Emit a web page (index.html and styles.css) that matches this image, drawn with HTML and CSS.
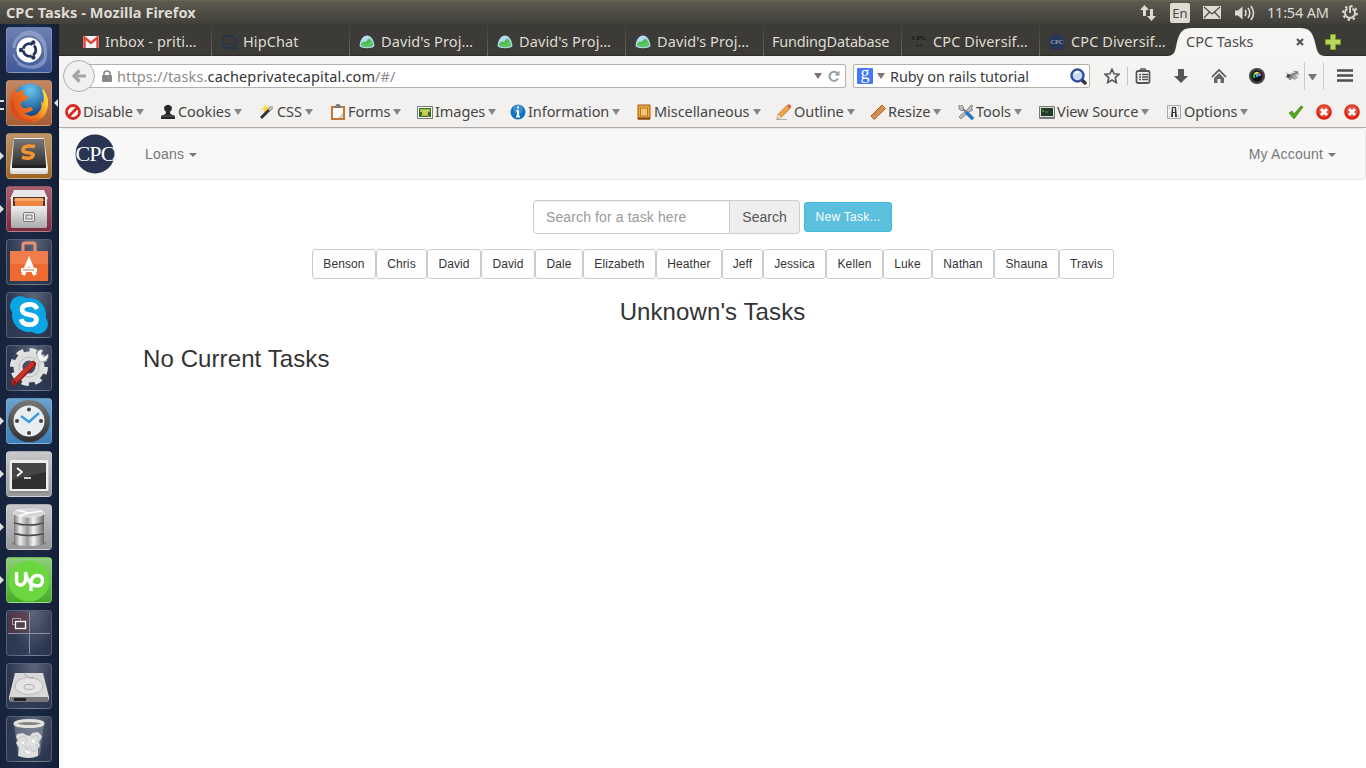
FILE: index.html
```html
<!DOCTYPE html>
<html lang="en">
<head>
<meta charset="utf-8">
<title>CPC Tasks</title>
<link rel="stylesheet" href="styles.css">
</head>
<body>
<svg class="defs" width="0" height="0">
  <defs>
    <linearGradient id="steel" x1="0" x2="1" y1="0" y2="0"><stop offset="0" stop-color="#777"/><stop offset=".2" stop-color="#eee"/><stop offset=".45" stop-color="#999"/><stop offset=".65" stop-color="#f4f4f4"/><stop offset="1" stop-color="#666"/></linearGradient>
    <linearGradient id="silver" x1="0" x2="0" y1="0" y2="1"><stop offset="0" stop-color="#f0f0f0"/><stop offset="1" stop-color="#a9a9a9"/></linearGradient>
    <linearGradient id="dark" x1="0" x2="0" y1="0" y2="1"><stop offset="0" stop-color="#777"/><stop offset="1" stop-color="#303030"/></linearGradient>
    <linearGradient id="fox" x1="0" x2="1" y1=".7" y2=".3"><stop offset="0" stop-color="#e04e1d"/><stop offset=".6" stop-color="#f17a20"/><stop offset="1" stop-color="#ffe13a"/></linearGradient>
    <radialGradient id="globe" cx=".5" cy=".2" r=".8"><stop offset="0" stop-color="#6cc5ef"/><stop offset="1" stop-color="#0b4384"/></radialGradient>
    <symbol id="camp" viewBox="0 0 16 14"><path d="M8 .5c4 0 7 4.500 7.500 10.500-2 3-13 3-15 0C1 5 4 .5 8 .5z" fill="#b5dbf5"/><path d="M1.500 10c1-2 2-3.500 3.500-3.500 1 0 1 .8 2 0 1.500-1.500 2-3.500 3.500-3 2 .8 3 3.500 4 6.500-2 3-11 3-13 0z" fill="#5cc75b"/><path d="M4 8l1.500.2L7 7.500l1 1 2-3 .5 1.500" fill="none" stroke="#34a853" stroke-width=".9"/></symbol>
    <symbol id="stop" viewBox="0 0 16 16"><circle cx="8" cy="8" r="7.800" fill="#dc220c"/><circle cx="8" cy="7" r="6" fill="#fff" opacity=".2"/><path d="M5 5l6 6m0-6l-6 6" stroke="#fff" stroke-width="3"/></symbol>
  </defs>
</svg>

<header class="titlebar">
  <span class="window-title">CPC Tasks - Mozilla Firefox</span>
  <div class="indicators">
    <svg width="18" height="16" viewBox="0 0 18 16"><path d="M5.500 0l4.500 5H7v6H4V5H1zM12.500 16L8 11h3V4h3v7h3z" fill="#dfdbd2"/></svg>
    <span class="lang">En</span>
    <svg class="mail" width="18" height="13" viewBox="0 0 18 13"><rect width="18" height="13" fill="#dfdbd2"/><path d="M1 1l8 7 8-7M1 12l5.500-6M17 12l-5.500-6" fill="none" stroke="#4a4943" stroke-width="1.200"/></svg>
    <svg class="sound" width="20" height="16" viewBox="0 0 20 16"><path d="M0 5.500h3L7.500 1.500v13L3 10.500H0z" fill="#dfdbd2"/><path d="M10 5q2 3 0 6M13 3q3.600 5 0 10M16 1q5 7 0 14" fill="none" stroke="#dfdbd2" stroke-width="1.600"/></svg>
    <span class="clock">11:54 AM</span>
    <svg width="16" height="16" viewBox="0 0 16 16"><circle cx="8" cy="8" r="6.900" fill="none" stroke="#dfdbd2" stroke-width="2" stroke-dasharray="2.500 2.920"/><path d="M5.500 3.600a5 5 0 1 0 5 0" fill="none" stroke="#dfdbd2" stroke-width="1.900"/><path d="M8 1v7" stroke="#dfdbd2" stroke-width="1.800"/></svg>
  </div>
</header>

<div class="desktop">
<nav class="launcher">
  <div class="tile blue"><svg viewBox="0 0 46 46"><g fill="none" stroke="#a9b9dc" opacity=".55"><path d="M8 21C8 4 35 0 39 22S22 43 12 36" stroke-width="3"/><path d="M15 7c14-8 28 5 24 20M38 32C29 44 12 41 7 27" stroke-width="2"/></g><circle cx="23" cy="23" r="12.500" fill="#fff"/><circle cx="23.500" cy="23" r="6.300" fill="none" stroke="#26345d" stroke-width="2.800" stroke-dasharray="11.600 1.600" stroke-dashoffset="-7.400"/><g fill="#26345d"><circle cx="15" cy="23" r="2.200"/><circle cx="27.300" cy="15.500" r="2.200"/><circle cx="27.300" cy="30.500" r="2.200"/></g></svg></div>
  <div class="tile brown win3 focused"><svg viewBox="0 0 46 46"><circle cx="24" cy="20" r="16.500" fill="url(#globe)"/><path d="M37 9q6 8 5 16-2 17-19 17Q4 41 4 24 4 14 9 8l1 5q5-4 8-2l-1 4 5 1q0 4-7 6-1 5 3 6 3 1 5-1 3 0 4 2-3 4-9 4 8 6 14 0 5-5 3-12l2 2q2-6-1-13z" fill="url(#fox)"/><path d="M5 24q0 13 12 17 10 3 18-4-12 5-20-1-8-5-7-17z" fill="#cf351b" opacity=".35"/></svg></div>
  <div class="tile ochre win"><svg viewBox="0 0 46 46"><rect x="4" y="34" width="38" height="7" rx="2" fill="#ddd"/><path d="M8 5h30l4 30q0 3-3 3H7q-3 0-3-3z" fill="#ededed"/><path d="M8 6h30l2 26H6z" fill="url(#dark)"/><path d="M6 32h34v3H6z" fill="#222"/><path d="M29 13.500q-11-2-12 3-.5 3 5 3.200 6 .5 5 3-1.500 4-11 1.500" fill="none" stroke="#f59230" stroke-width="3.600"/></svg></div>
  <div class="tile red win"><svg viewBox="0 0 46 46"><path d="M8 4h30l4 9H4z" fill="#e7e7e7"/><path d="M5 11h36v29q0 2-2 2H7q-2 0-2-2z" fill="url(#silver)"/><path d="M7 11h32v10H7z" fill="#4c332a"/><path d="M9 12h28l1 3H8z" fill="#f5a76c"/><path d="M9 15h28v5H9z" fill="#ee8340"/><path d="M5 20h36v20q0 2-2 2H7q-2 0-2-2z" fill="url(#silver)"/><rect x="17.500" y="26.500" width="11" height="9" rx="1.500" fill="#eee" stroke="#777"/><rect x="20" y="29" width="6" height="4" fill="#ddd" stroke="#777"/></svg></div>
  <div class="tile"><svg viewBox="0 0 46 46"><path d="M17 13V6q0-2 2-2h8q2 0 2 2v7" fill="none" stroke="#ed9074" stroke-width="3"/><path d="M4 12h38v30H4z" fill="#ee6a30"/><path d="M4 12h38v13H4z" fill="#fff" opacity=".12"/><path d="M17 36l6-14 6 14" fill="none" stroke="#fff" stroke-width="4"/><path d="M15 31h16" stroke="#fff" stroke-width="4"/><path d="M17 31h11" stroke="#ee6a30"/></svg></div>
  <div class="tile"><svg viewBox="0 0 46 46"><g fill="#0aa5e5"><circle cx="23" cy="23" r="17"/><circle cx="14" cy="14" r="10"/><circle cx="32" cy="32" r="10"/></g><path d="M31 17q-2-5-8-4.500-7 .5-7 5 0 4 7 5.200 7.500 1 7.500 5-.5 5-7.500 5-6.500 0-8-5.500" fill="none" stroke="#fff" stroke-width="4.800"/></svg></div>
  <div class="tile"><svg viewBox="0 0 46 46"><circle cx="23" cy="22" r="16.500" fill="none" stroke="#e4e4e4" stroke-width="5" stroke-dasharray="7 5.960"/><circle cx="23" cy="22" r="11" fill="none" stroke="#dedede" stroke-width="9"/><circle cx="23" cy="22" r="10" fill="none" stroke="#bbb"/><path d="M23 24L36 10" stroke="#ddd" stroke-width="4"/><path d="M31 8q1-4 6-3l-2 4 3 3 4-3q1 5-3 7l-5 1q-4-4-3-9z" fill="#f3f3f3" stroke="#999" stroke-width=".7"/><path d="M8 38L27 19" stroke="#851b18" stroke-width="6" stroke-linecap="round"/><path d="M8 37L26 19" stroke="#cc302a" stroke-width="4.500" stroke-linecap="round"/><circle cx="8.500" cy="37" r="1.500" fill="#771310"/></svg></div>
  <div class="tile sky win"><svg viewBox="0 0 46 46"><circle cx="23" cy="23" r="21" fill="url(#dark)"/><circle cx="23" cy="23" r="15.500" fill="#e7edf1"/><g fill="#424242"><circle cx="23" cy="11.500" r="2"/><circle cx="23" cy="35" r="2"/><circle cx="11" cy="23" r="2"/><circle cx="35" cy="23" r="2"/></g><path d="M15 18l8 6 10-9" fill="none" stroke="#379be8" stroke-width="2.400"/></svg></div>
  <div class="tile grey win"><svg viewBox="0 0 46 46"><rect x="3.500" y="9" width="39" height="33" rx="1.500" fill="#8b8b8b"/><rect x="3.500" y="9" width="39" height="31" rx="1" fill="#eee"/><rect x="6" y="12" width="34" height="26" fill="#303030"/><path d="M6 12h34v9L6 29z" fill="#fff" opacity=".1"/><path d="M11 17l5 4-5 4M18 27h7" fill="none" stroke="#fff" stroke-width="1.700"/></svg></div>
  <div class="tile grey win"><svg viewBox="0 0 46 46"><ellipse cx="23" cy="39" rx="17" ry="3" fill="#777"/><g fill="url(#steel)"><path d="M8 30v8q0 4 15 4t15-4v-8q-15 5-30 0zM8 20v8q15 5 30 0v-8q-15 5-30 0zM8 9v9q15 5 30 0V9z"/></g><path d="M8 19q15 4 30 0M8 29.500q15 4 30 0" fill="none" stroke="#484848" stroke-width="1.500"/><ellipse cx="23" cy="9" rx="15.500" ry="4" fill="#d4d4d4" stroke="#e5e5e5"/><path d="M23 9L11 6M23 9l13-2M23 9l-10 3" stroke="#fff" stroke-width="1.500"/></svg></div>
  <div class="tile green win"><svg viewBox="0 0 46 46"><circle cx="23" cy="24" r="20.500" fill="#6bd63f"/><path d="M10.500 15v8q0 5 4 5t5-5v-8q1 8 6 12 3 2 6 2 5-.5 5-5.500t-5-5q-6 0-6.500 7V34" fill="none" stroke="#fff" stroke-width="3.400"/></svg></div>
  <div class="tile spaces"><svg viewBox="0 0 46 46"><rect x="2" y="2" width="21" height="21" fill="#6b3543" opacity=".55"/><path d="M23.500 2v42M2 23.500h42" stroke="#8992a3"/><path d="M6.500 8.500h8v6h-8z" fill="none" stroke="#aaa3aa"/><rect x="9.500" y="11.500" width="10" height="7" fill="#52414a" stroke="#fff" stroke-width="1.300"/></svg></div>
  <div class="tile"><svg viewBox="0 0 46 46"><path d="M9 10h28l6 24q0 4-2 5H5q-2-1-2-5z" fill="#d8d8d8"/><path d="M4 34h38v4q0 1-1 1H5q-1 0-1-1z" fill="#777"/><path d="M8 35h12v3H8z" fill="#222"/><ellipse cx="23" cy="23" rx="14" ry="8.500" fill="#e4e4e4" stroke="#b8b8b8"/><ellipse cx="23" cy="24" rx="5" ry="2.500" fill="none" stroke="#aaa"/><path d="M28 15q-6 1-10-4" fill="none" stroke="#aaa"/></svg></div>
  <div class="tile"><svg viewBox="0 0 46 46"><path d="M8 7l4 32q11 6 22 0l4-32z" fill="#bac2cb" opacity=".35"/><path d="M11 18l6-1 3 2 4 1 2-3 6-1 3 3 1 2-3 5 1 4-2 3v7q-9 4-20 0l1-8-3-5 2-3-2-3z" fill="#dedede"/><path d="M13 22l5-2 3 5-4 4 5 4-4 4m7-15l6-3 2 5-5 3 5 4-6 5-4-6" fill="none" stroke="#c5c5c5"/><path d="M16 26l2 2m8-4l3 3m-10 8l5 2" stroke="#fff" stroke-width="2"/><ellipse cx="23" cy="7.500" rx="14" ry="3" fill="#838783" stroke="#e3e4df" stroke-width="3"/></svg></div>
</nav>

<main class="browser">
  <div class="tabs">
    <div class="tab"><svg width="16" height="16" viewBox="0 0 16 16"><rect y="2" width="16" height="12" rx="1" fill="#f4f4f4"/><path d="M1.500 14V3.500L8 9l6.500-5.500V14" fill="none" stroke="#df4238" stroke-width="2.400"/></svg><span>Inbox - priti…</span></div>
    <div class="tab"><svg width="16" height="16" viewBox="0 0 16 16"><path d="M13 12.500A7 6.300 0 1 0 10 14l4.500.7z" fill="none" stroke="#22344f" stroke-width="1.500"/><path d="M4.500 9q3.500 3 7 0" fill="none" stroke="#22344f" stroke-width="1.200"/></svg><span>HipChat</span></div>
    <div class="tab"><svg width="16" height="14"><use href="#camp"/></svg><span>David's Proj…</span></div>
    <div class="tab"><svg width="16" height="14"><use href="#camp"/></svg><span>David's Proj…</span></div>
    <div class="tab"><svg width="16" height="14"><use href="#camp"/></svg><span>David's Proj…</span></div>
    <div class="tab"><span class="funding">FundingDatabase</span></div>
    <div class="tab"><i class="cpc-plus">CPC<br>++</i><span>CPC Diversif…</span></div>
    <div class="tab last"><i class="cpc-mini">CPC</i><span>CPC Diversif…</span></div>
    <div class="tab-active">
      <svg class="tab-shape" width="160" height="28" viewBox="0 0 160 28"><path d="M0 28C10 28 9 22 11 14 14 3 17 0 26 0H134C143 0 146 3 149 14 151 22 151 28 160 28z" fill="#f6f5f4"/></svg>
      <div class="tab-label"><span>CPC Tasks</span><svg width="8" height="8" viewBox="0 0 8 8"><path d="M1 1l6 6m0-6L1 7" stroke="#555" stroke-width="2.200"/></svg></div>
    </div>
    <svg class="new-tab" width="16" height="16" viewBox="0 0 16 16"><path d="M5.500.5h5v5h5v5h-5v5h-5v-5h-5v-5h5z" fill="#b7d65b" stroke="#7b9c2c"/></svg>
  </div>

  <div class="navigation">
    <div class="back"><svg width="16" height="16" viewBox="0 0 16 16"><path d="M8.500 2.500L3 8l5.500 5.500M3.500 8H15" fill="none" stroke="#a5a5a5" stroke-width="3.200"/></svg></div>
    <div class="url">
      <svg width="10" height="12" viewBox="0 0 10 12"><path d="M2 6V3.500Q2 1 5 1t3 2.500V6" fill="none" stroke="#888" stroke-width="1.600"/><rect y="5" width="10" height="7" rx="1" fill="#888"/></svg>
      <span class="address">https://tasks.<b>cacheprivatecapital.com</b>/#/</span>
      <i class="caret"></i>
      <svg width="12" height="12" viewBox="0 0 12 12"><path d="M9.500 3.500A4.500 4.500 0 1 0 10 8.500" fill="none" stroke="#93a0a8" stroke-width="2"/><path d="M6.500 5.500h5V.5z" fill="#93a0a8"/></svg>
    </div>
    <div class="search">
      <i class="google">g</i><i class="caret"></i><span>Ruby on rails tutorial</span>
      <svg width="17" height="17" viewBox="0 0 17 17"><path d="M11 11l4 4" stroke="#333" stroke-width="3.500" stroke-linecap="round"/><circle cx="7.500" cy="7.500" r="6" fill="#c7dcf5" stroke="#2f4d9c" stroke-width="2.400"/><path d="M5 5q2-2 4-1" fill="none" stroke="#fff" stroke-width="2"/></svg>
    </div>
    <div class="actions">
      <span class="star"><svg viewBox="0 0 16 16"><path d="M8 1.200l2 4.600 5 .5-3.800 3.300 1.200 5L8 12l-4.400 2.600 1.200-5L1 6.300l5-.5z" fill="none" stroke="#555" stroke-width="1.600"/></svg></span>
      <svg viewBox="0 0 16 16"><rect x="1.500" y="3" width="13" height="12" rx="1.500" fill="none" stroke="#555" stroke-width="1.800"/><path d="M5 3l1-2h4l1 2M4 6.500h2M7 6.500h6M4 9h2m1 0h6M4 11.500h2m1 0h6" fill="none" stroke="#555" stroke-width="1.500"/></svg>
      <svg viewBox="0 0 16 16"><path d="M5 1h6v7h4l-7 7-7-7h4z" fill="#555"/></svg>
      <svg viewBox="0 0 16 16"><path d="M1 9l7-7 7 7" fill="none" stroke="#555" stroke-width="1.700"/><path d="M3 10l5-5 5 5v5H9.500v-4h-3v4H3z" fill="#666"/></svg>
      <svg viewBox="0 0 16 16"><circle cx="8" cy="8" r="8" fill="#444"/><circle cx="8" cy="8" r="5.500" fill="#111"/><g fill="none" stroke-width="2"><path d="M5.500 10a3.500 3.500 0 0 1 0-4" stroke="#20cf42"/><path d="M5.500 6q2-2 4-1" stroke="#d9e944"/><path d="M9.500 5q2 1 2 3" stroke="#ed329d"/><path d="M8 9V7h3" stroke="#36a9e9"/></g></svg>
      <svg class="fly" viewBox="0 0 16 16"><path d="M2 7l5-2 7-2-2 5 2 2-3 1-2-1-3 2-3-1 2-2z" fill="#aaa"/><path d="M2 5l5 4 4 3M5 12l3-5 5-3M1 9h4l3-3M9 3l4 1 1 3" fill="none" stroke="#666" stroke-width=".8"/><circle cx="4" cy="8" r="1.800" fill="#444"/></svg>
      <span class="fly-menu"><i class="caret"></i></span>
      <svg class="burger" viewBox="0 0 16 16"><path d="M0 2.500h16M0 7.500h16M0 12.500h16" stroke="#4d4d4d" stroke-width="2.600"/></svg>
    </div>
  </div>

  <div class="devbar">
    <div><svg viewBox="0 0 16 16"><circle cx="8" cy="8" r="6.500" fill="#fff" stroke="#d52a22" stroke-width="2.800"/><path d="M3.500 12.500l9-9" stroke="#d52a22" stroke-width="2.800"/></svg><span>Disable</span><i class="caret"></i></div>
    <div><svg viewBox="0 0 16 16"><path d="M6 8Q3 5 4.500 2.500 8-1 11.500 2.500 13 5 10 8l.5 2 4.500 2v3H1v-3l4.500-2z" fill="#292929"/><path d="M1 12h14" stroke="#777" stroke-width=".7"/></svg><span>Cookies</span><i class="caret"></i></div>
    <div><svg viewBox="0 0 16 16"><path d="M6 0l1 3 3-1-2 3 2 3-3-1-2 2V6L1 5l4-1z" fill="#ffd52c"/><path d="M2 14L13 3" stroke="#333" stroke-width="3"/><path d="M10 6l4-4" stroke="#ccc" stroke-width="2"/></svg><span>CSS</span><i class="caret"></i></div>
    <div><svg viewBox="0 0 16 16"><rect x="1" y="2" width="14" height="14" fill="#c77731"/><path d="M3 4h10v10H3z" fill="#fff"/><path d="M13 14V9l-5 5z" fill="#ccc"/><path d="M5 4V2l2-2h2l2 2v2z" fill="#777"/></svg><span>Forms</span><i class="caret"></i></div>
    <div><svg viewBox="0 0 16 16"><path d="M.5 2.500h15v12H.5z" fill="#fff" stroke="#777"/><path d="M2 4h12v9H2z" fill="#316a20"/><path d="M3 5h10v3H3z" fill="#9fc85a"/><circle cx="8" cy="9" r="3" fill="#d5ce55"/><path d="M4 12q4-3 8 0" stroke="#b4c64d" fill="none"/></svg><span>Images</span><i class="caret"></i></div>
    <div><svg viewBox="0 0 16 16"><circle cx="8" cy="8" r="7.500" fill="#0c72c6"/><circle cx="8" cy="5" r="5" fill="#fff" opacity=".2"/><path d="M8 2.500v2M6.500 7H8v5M6 12.500h4" stroke="#fff" stroke-width="2" fill="none"/></svg><span>Information</span><i class="caret"></i></div>
    <div><svg viewBox="0 0 16 16"><path d="M2 1h12v14H2z" fill="#f0a73e" stroke="#a25a14"/><path d="M4.500 4h7v8h-7z" fill="#f6c46c" stroke="#ba7424"/><path d="M2 14.500h12" stroke="#804410" stroke-width="2"/></svg><span>Miscellaneous</span><i class="caret"></i></div>
    <div><svg viewBox="0 0 16 16"><path d="M1 15l1.500-5L11 1.500l3 3L5.500 13z" fill="#f3a43e" stroke="#a66125" stroke-width=".7"/><path d="M11 1.500L13 0l2.500 2.500-1.500 2z" fill="#df5548"/><path d="M1 15l1.500-4 2.500 2z" fill="#eee"/><path d="M0 15.500h11" stroke="#aaa"/></svg><span>Outline</span><i class="caret"></i></div>
    <div><svg viewBox="0 0 16 16"><path d="M1 12L12 1l3.500 3.500L4 15.500z" fill="#d99652" stroke="#a86028"/><path d="M4 10l1.500 1.500M6 8l1.500 1.500M8 6l1.500 1.500M10 4l1.500 1.500" stroke="#b0703a"/></svg><span>Resize</span><i class="caret"></i></div>
    <div><svg viewBox="0 0 16 16"><path d="M2 2l11 11" stroke="#777" stroke-width="2"/><path d="M1 1v4l3 2 2-2-2-4M10 5l3-4 2 1-2 2 2 2-4 2L3 15l-2-2z" fill="#bbb" stroke="#666" stroke-width=".7"/><path d="M9 9l5 5" stroke="#2876c6" stroke-width="3.600" stroke-linecap="round"/></svg><span>Tools</span><i class="caret"></i></div>
    <div><svg viewBox="0 0 16 16"><path d="M.5 2.500h15v12H.5z" fill="#ddd" stroke="#777"/><path d="M2 4h12v8H2z" fill="#243a24"/><path d="M3 5.500l2 1.500-2 1M6 8h3" stroke="#77bc65" fill="none" stroke-width=".7"/><path d="M1 13.500h14" stroke="#777"/></svg><span>View Source</span><i class="caret"></i></div>
    <div><svg viewBox="0 0 16 16"><path d="M1.500 1.500h13v13h-13z" fill="#f3f3f3" stroke="#aaa"/><path d="M6 3h4l1 10H9V9H7v4H5z" fill="#333"/><path d="M7 4h2v4H7z" fill="#ddd"/><path d="M3 4h1m-1 8h1m8-8h1m-1 8h1" stroke="#888"/></svg><span>Options</span><i class="caret"></i></div>
    <div class="status"><svg viewBox="0 0 16 16"><path d="M1 9l3-2 2 3 7-8 2 1-9 12z" fill="#53a719" stroke="#327509" stroke-width=".6"/></svg><svg><use href="#stop"/></svg><svg><use href="#stop"/></svg></div>
  </div>

  <section class="page">
    <nav class="navbar">
      <span class="logo"><svg viewBox="0 0 40 40"><circle cx="20" cy="20" r="19.500" fill="#293452"/></svg><b>CPC</b></span>
      <a class="loans">Loans<i></i></a><a class="account">My Account<i></i></a>
    </nav>
    <div class="task-search"><span class="field">Search for a task here</span><span class="addon">Search</span><span class="new-task">New Task...</span></div>
    <div class="people"><span>Benson</span><span>Chris</span><span>David</span><span>David</span><span>Dale</span><span>Elizabeth</span><span>Heather</span><span>Jeff</span><span>Jessica</span><span>Kellen</span><span>Luke</span><span>Nathan</span><span>Shauna</span><span>Travis</span></div>
    <h3 class="owner">Unknown's Tasks</h3>
    <h3 class="empty">No Current Tasks</h3>
  </section>
</main>
</div>
</body>
</html>
```
FILE: styles.css
```css
* { box-sizing: border-box; }
body { margin: 0; width: 1366px; height: 768px; overflow: hidden; background: #fff; font: 14.5px/20px "Noto Sans", sans-serif; }
svg { display: block; flex: none; }
i { font-style: normal; flex: none; }
.defs { position: absolute; }
.titlebar { height: 24px; display: flex; justify-content: space-between; align-items: center; padding: 0 8px 0 6px; background: linear-gradient(#5c5a50, #403f3a); border-top: 1px solid #66644f; color: #dfdbd2; }
.window-title { font-weight: 700; font-size: 14.5px; letter-spacing: .06px; padding-bottom: 2px; }
.indicators { display: flex; align-items: center; }
.lang { width: 20px; height: 20px; margin: 0 13px 0 13px; background: #dfdbd2; border-radius: 2px; color: #494842; font-size: 13px; text-align: center; }
.sound { margin: 0 12px 0 14px; }
.clock { width: 75px; white-space: nowrap; letter-spacing: -.2px; padding-bottom: 2px; }
.desktop { display: flex; height: 744px; }
.launcher { width: 59px; flex: none; display: flex; flex-direction: column; gap: 7px; padding: 3px 0 0 6px; background: linear-gradient(90deg, #17233c, #1a2946 50%, #142038); border-right: 1px solid #111a2b; }
.tile { position: relative; flex: none; width: 46px; height: 46px; border-radius: 4px; border: 1px solid #ffffff30; background: radial-gradient(ellipse at 60% 0, #a0a3b080, #ffffff18 65%); }
.tile svg { width: 46px; height: 46px; margin: -1px; }
.tile.blue { background: linear-gradient(#6e80b0, #40599a); }
.tile.brown { background: linear-gradient(#c28765, #a75e34); }
.tile.ochre { background: linear-gradient(#be966a, #9b6524); }
.tile.red { background: linear-gradient(#a6606e, #7c2c3e); }
.tile.sky { background: linear-gradient(#6ba1cf, #3c7eb5); }
.tile.grey { background: linear-gradient(#c8c8cc, #96969b); }
.tile.green { background: linear-gradient(#8fcf78, #48a92b); }
.win::before { content: ""; position: absolute; left: -7px; top: 18px; border: 4px solid transparent; border-left-color: #dedede; border-right: 0; }
.win3::before { content: ""; position: absolute; left: -7px; top: 19px; width: 4px; height: 6px; border: solid #dedede; border-width: 2px 0; }
.focused::after { content: ""; position: absolute; right: -7px; top: 18px; border: 4px solid transparent; border-right-color: #dedede; border-left: 0; }
.browser { flex: 1; min-width: 0; }
.tabs { display: flex; height: 32px; padding-left: 15px; background: #3c3b37; border-bottom: 1px solid #2d2c29; color: #dfdbd2; }
.tab { width: 138px; height: 32px; flex: none; display: flex; align-items: center; gap: 6px; padding: 4px 0 0 9px; border-right: 1px solid; border-image: linear-gradient(#3c3b37, #6b6a65) 1; white-space: nowrap; }
.tab.last { border-image: none; border-color: transparent; width: 126px; }
.tab span { letter-spacing: .1px; padding-bottom: 2px; }
.tab .funding { letter-spacing: -.2px; margin-left: -1px; }
.cpc-plus, .cpc-mini { width: 16px; font: bold 7px/8px "Liberation Serif", serif; text-align: center; color: #151515; }
.cpc-mini { height: 16px; border-radius: 8px; background: #26355a; color: #b8bfce; line-height: 16px; font-weight: 400; }
.tab-active { width: 160px; height: 28px; margin-top: 4px; flex: none; display: grid; position: relative; z-index: 1; }
.tab-active > * { grid-area: 1 / 1; }
.tab-label { display: flex; align-items: center; justify-content: space-between; padding: 0 22px 0 20px; position: relative; color: #4c4c4c; }
.tab-label span { padding-bottom: 2px; }
.new-tab { margin: 10px 0 0 -1px; }
.navigation { height: 40px; display: flex; align-items: center; padding-left: 4px; background: linear-gradient(#f6f5f4, #f2f1f0); color: #3c3c3c; }
.back { width: 32px; height: 32px; flex: none; position: relative; z-index: 1; border: 1px solid #a9b0b8; border-radius: 50%; background: #f2f1f0; display: grid; place-items: center; }
.url { width: 766px; height: 24px; flex: none; margin-left: -15px; display: flex; align-items: center; background: #fff; border: 1px solid #b3afa9; border-radius: 2px; padding: 0 5px 0 21px; }
.address { flex: 1; margin-left: 5px; color: #8c8c8c; white-space: nowrap; letter-spacing: .12px; }
.address b { font-weight: 400; color: #333; }
.caret { border: 4.5px solid transparent; border-top: 6px solid #777; border-bottom: 0; }
.url .caret { margin-right: 6px; }
.search { width: 237px; height: 24px; flex: none; margin-left: 7px; display: flex; align-items: center; background: #fff; border: 1px solid #b3afa9; border-radius: 2px; padding: 0 2px 0 3px; }
.search > span { flex: 1; margin-left: 5px; white-space: nowrap; letter-spacing: -.1px; }
.google { width: 16px; height: 16px; margin-right: 4px; border-radius: 1px; background: #4379f5; color: #fff; font: 18px/11px "Liberation Serif", serif; text-align: center; }
.actions { display: grid; grid-template-columns: 31px 38px 38px 38px 38px 28px 19px 32px; padding-left: 14px; align-items: center; }
.actions svg { width: 16px; height: 16px; }
.star { width: 24px; height: 18px; border-right: 1px solid #c5c5c5; padding-top: 1px; }
.actions .fly { margin-left: -3px; width: 17px; }
.fly-menu { height: 28px; width: 20px; border: solid #c8cbd0; border-width: 0 1px; padding: 12px 0 0 3px; margin-left: -11px; }
.fly-menu .caret { display: block; width: 9px; }
.burger { margin-left: 3px; }
.devbar { height: 32px; display: grid; grid-template-columns: 95px 99px 71px 87px 93px 126px 140px 94px 88px 81px 127px 122px 66px; padding-left: 6px; background: #f2f1f0; border-bottom: 1px solid #b1aeaa; color: #454545; }
.devbar > div { display: flex; align-items: center; white-space: nowrap; min-width: 0; }
.devbar span { margin: 0 3px 0 2px; padding-bottom: 2px; letter-spacing: -.07px; }
.devbar svg { width: 16px; height: 16px; }
.devbar .caret { border-top-color: #858585; }
.devbar .status { gap: 12px; }
.page { font: 14px/20px "Liberation Sans", Arial, sans-serif; color: #333; }
.navbar { height: 52px; border: 1px solid #e7e7e7; border-radius: 4px; background: #f8f8f8; display: flex; align-items: center; color: #777; padding: 0 29px 0 15px; }
.logo { width: 40px; height: 40px; display: grid; }
.logo > * { grid-area: 1 / 1; }
.logo svg { width: 40px; height: 40px; }
.logo b { position: relative; font: 22px/40px "Liberation Serif", serif; color: #fff; text-align: center; letter-spacing: -.8px; }
.navbar a { display: flex; align-items: center; letter-spacing: .2px; }
.navbar i { border: 4.5px solid transparent; border-top-color: #777; border-bottom: 0; margin: 2px 0 0 5px; }
.loans { margin-left: 30px; }
.account { margin-left: auto; }
.task-search { display: flex; align-items: center; padding: 20px 0 0 474px; }
.field { width: 197px; height: 34px; padding: 6px 12px; border: 1px solid #ccc; border-radius: 4px 0 0 4px; color: #999; letter-spacing: .12px; box-shadow: inset 0 1px 1px #00000013; white-space: nowrap; }
.addon { width: 70px; height: 34px; padding: 6px 0; text-align: center; background: #eee; border: 1px solid #ccc; border-left: 0; border-radius: 0 4px 4px 0; color: #555; }
.new-task { width: 88px; height: 30px; margin-left: 4px; background: #5bc0de; border: 1px solid #46b8da; border-radius: 3px; color: #fff; font-size: 12px; line-height: 28px; text-align: center; letter-spacing: .3px; }
.people { display: grid; grid-template-columns: 64px 51px 54px 54px 48px 73px 66px 41px 63px 57px 49px 62px 65px 55px; padding: 15px 0 0 253px; }
.people span { height: 30px; border: 1px solid #ccc; border-radius: 3px; font-size: 12px; line-height: 28px; text-align: center; letter-spacing: .1px; }
h3 { margin: 0; font-weight: 400; font-size: 24px; line-height: 26px; letter-spacing: .1px; }
.owner { text-align: center; margin-top: 20px; }
.empty { margin: 21px 0 0 84px; }
```
